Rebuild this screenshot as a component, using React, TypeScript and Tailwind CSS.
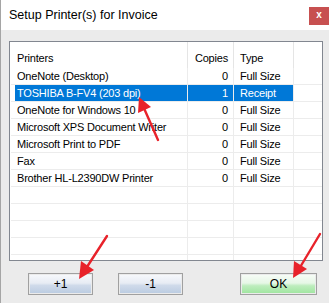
const printers = [
  { name: 'OneNote (Desktop)', copies: 0, type: 'Full Size' },
  { name: 'TOSHIBA B-FV4 (203 dpi)', copies: 1, type: 'Receipt', selected: true },
  { name: 'OneNote for Windows 10', copies: 0, type: 'Full Size' },
  { name: 'Microsoft XPS Document Writer', copies: 0, type: 'Full Size' },
  { name: 'Microsoft Print to PDF', copies: 0, type: 'Full Size' },
  { name: 'Fax', copies: 0, type: 'Full Size' },
  { name: 'Brother HL-L2390DW Printer', copies: 0, type: 'Full Size' },
]

const emptyRows = Array.from({ length: 6 }, (_, i) => i)

/* ─── Red annotation arrows ──────────────────────────────────────── */
const Arrows = () => (
  <svg className="pointer-events-none absolute left-0 top-0" width={329} height={303} viewBox="0 0 329 303">
    <g stroke="#e8222a" strokeWidth={2.4} strokeLinecap="round" fill="#e8222a">
      <line x1="157" y1="140" x2="142" y2="106" />
      <polygon points="138,97 150,107 137,113" stroke="none" />
      <line x1="106" y1="236" x2="84" y2="270" />
      <polygon points="78,279 93,270 80,261" stroke="none" />
      <line x1="319" y1="234" x2="298" y2="269" />
      <polygon points="292,278 306,269 293,261" stroke="none" />
    </g>
  </svg>
)

const Button = ({ label, width, green }: { label: string; width: string; green?: boolean }) => (
  <div className={`${width} h-[22px] border border-[#a0a0a0] p-px`}>
    <div
      className={`h-full flex items-center justify-center text-[12px] text-black ${
        green
          ? 'bg-[linear-gradient(to_bottom,#f6fcf6_0%,#e6f7e6_45%,#bdedbd_60%,#a2e6a2_100%)]'
          : 'bg-[linear-gradient(to_bottom,#f6f8fb_0%,#e7ecf4_45%,#cfdaea_58%,#bccde2_100%)]'
      }`}
    >
      {label}
    </div>
  </div>
)

export default function App() {
  return (
    <div className="relative w-[329px] h-[303px] overflow-hidden bg-[#ebebeb] border-l border-[#a5a5a5] font-['Liberation_Sans',Arial,sans-serif]">
      {/* ── Title bar ── */}
      <div className="h-[30px] bg-white flex items-start justify-between">
        <div className="pl-[8px] pt-[8px] text-[12.5px] leading-[14px] text-black">Setup Printer(s) for Invoice</div>
        <div className="mt-[7px] w-[20px] h-[18px] bg-[#c75050] flex items-center justify-center text-white text-[10px] font-bold leading-none pb-[2px]">
          x
        </div>
      </div>

      {/* ── List view ── */}
      <div className="pt-[11px] pl-[8px]">
        <div className="w-[314px] h-[220px] border border-[#828790] bg-white overflow-hidden text-[11px] tracking-[-0.2px] text-black">
          <div className="h-[26px] flex">
            <div className="w-[178px] border-r border-[#e5e5e5] pl-[7px] pt-[9px] leading-[14px]">Printers</div>
            <div className="w-[46px] border-r border-[#e5e5e5] pr-[5px] pt-[9px] leading-[14px] text-right">Copies</div>
            <div className="w-[60px] border-r border-[#e5e5e5] pl-[6px] pt-[9px] leading-[14px]">Type</div>
            <div className="flex-1" />
          </div>
          {printers.map(p => (
            <div key={p.name} className="h-[17px] flex border-b border-[#ececec] ml-px">
              <div className="w-[177px] border-r border-[#ececec] pl-[4px] flex">
                <div className={`flex-1 pl-[2px] leading-[16px] whitespace-nowrap ${p.selected ? 'bg-[#0078d7] text-white' : ''}`}>{p.name}</div>
              </div>
              <div className={`w-[46px] border-r border-[#ececec] pr-[5px] leading-[16px] text-right ${p.selected ? 'bg-[#0078d7] text-white' : ''}`}>
                {p.copies}
              </div>
              <div className={`w-[60px] border-r border-[#ececec] pl-[6px] leading-[16px] ${p.selected ? 'bg-[#0078d7] text-white' : ''}`}>
                {p.type}
              </div>
              <div className="flex-1" />
            </div>
          ))}
          {emptyRows.map(i => (
            <div key={i} className="h-[17px] flex border-b border-[#ececec] ml-px">
              <div className="w-[177px] border-r border-[#ececec]" />
              <div className="w-[46px] border-r border-[#ececec]" />
              <div className="w-[60px] border-r border-[#ececec]" />
              <div className="flex-1" />
            </div>
          ))}
        </div>
      </div>

      {/* ── Buttons ── */}
      <div className="flex mt-[12px]">
        <div className="ml-[27px]">
          <Button label="+1" width="w-[65px]" />
        </div>
        <div className="ml-[25px]">
          <Button label="-1" width="w-[65px]" />
        </div>
        <div className="ml-[57px]">
          <Button label="OK" width="w-[77px]" green />
        </div>
      </div>

      <Arrows />
    </div>
  )
}
